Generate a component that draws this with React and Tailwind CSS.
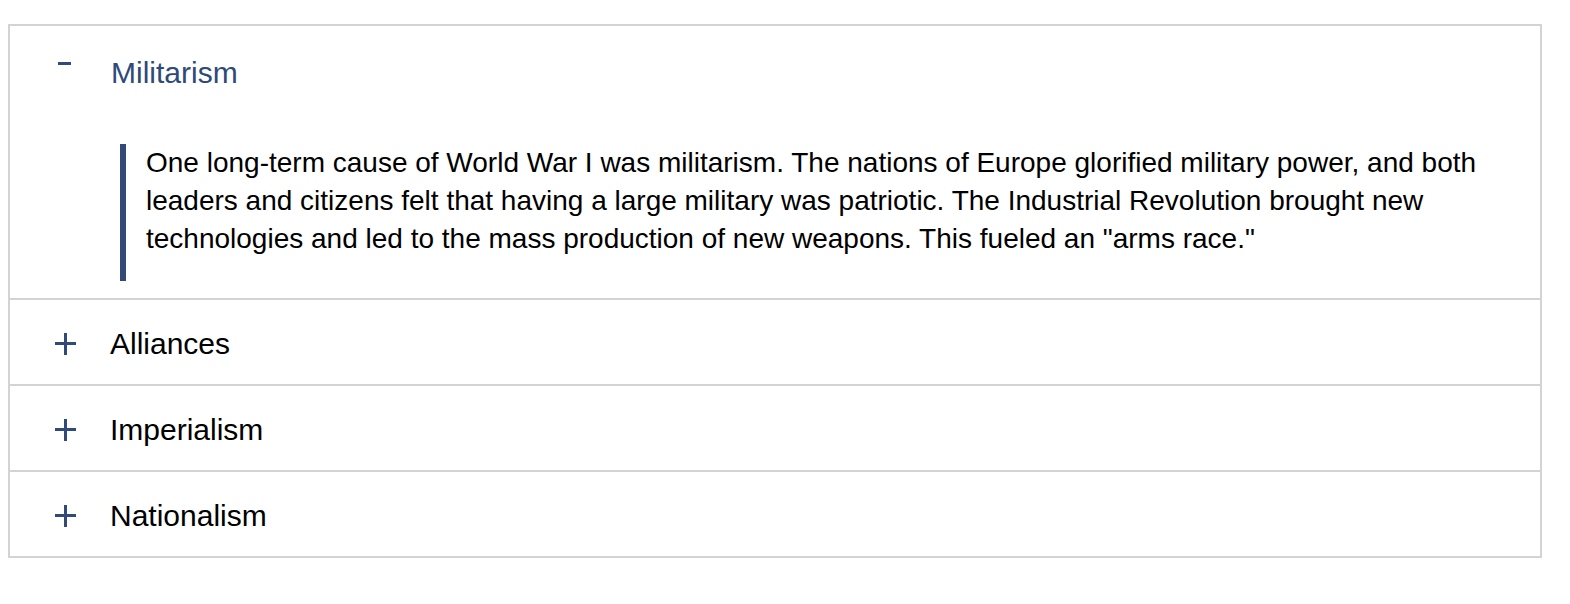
import { useState } from "react";

const items = [
  {
    title: "Militarism",
    body: 'One long-term cause of World War I was militarism. The nations of Europe glorified military power, and both leaders and citizens felt that having a large military was patriotic. The Industrial Revolution brought new technologies and led to the mass production of new weapons. This fueled an "arms race."',
  },
  { title: "Alliances", body: "" },
  { title: "Imperialism", body: "" },
  { title: "Nationalism", body: "" },
];

function PlusIcon() {
  return (
    <span className="relative block w-[22px] h-[22px]">
      <span className="absolute left-0 top-[9.5px] w-[21px] h-[3px] bg-[#314a78]" />
      <span className="absolute top-0 left-[9px] w-[3px] h-[22px] bg-[#314a78]" />
    </span>
  );
}

function MinusIcon() {
  return (
    <span className="relative block w-[22px] h-[22px]">
      <span className="absolute left-[3px] top-[0px] w-[13px] h-[3px] bg-[#314a78]" />
    </span>
  );
}

export default function App() {
  const [open, setOpen] = useState(0);

  return (
    <div className="min-h-screen bg-white font-['Liberation_Sans',Arial,sans-serif]">
      <div className="pt-6 pl-2">
        <div className="w-[1534px] border-2 border-[#d3d3d3]">
          {items.map((item, i) => {
            const isOpen = open === i;
            return (
              <div
                key={item.title}
                className={i > 0 ? "border-t-2 border-[#d3d3d3]" : ""}
              >
                <button
                  onClick={() => setOpen(isOpen ? -1 : i)}
                  className={`w-full flex items-center text-left pl-[45px] ${
                    isOpen ? "h-[88px] pt-[6px]" : "h-[84px] pt-[3px]"
                  }`}
                >
                  <span className="w-[22px] flex items-center">
                    {isOpen ? <MinusIcon /> : <PlusIcon />}
                  </span>
                  <span
                    className={`text-[30px] leading-none ${
                      isOpen ? "ml-[34px] text-[#2e4a78]" : "ml-[33px] text-black"
                    }`}
                  >
                    {item.title}
                  </span>
                </button>
                {isOpen && item.body && (
                  <div className="pt-[30px] pb-[17px] pl-[110px] pr-[40px]">
                    <blockquote className="border-l-[6px] border-[#314a78] pl-[20px] pb-[23px]">
                      <p className="text-[28px] leading-[38px] text-black">
                        {item.body}
                      </p>
                    </blockquote>
                  </div>
                )}
              </div>
            );
          })}
        </div>
      </div>
    </div>
  );
}
